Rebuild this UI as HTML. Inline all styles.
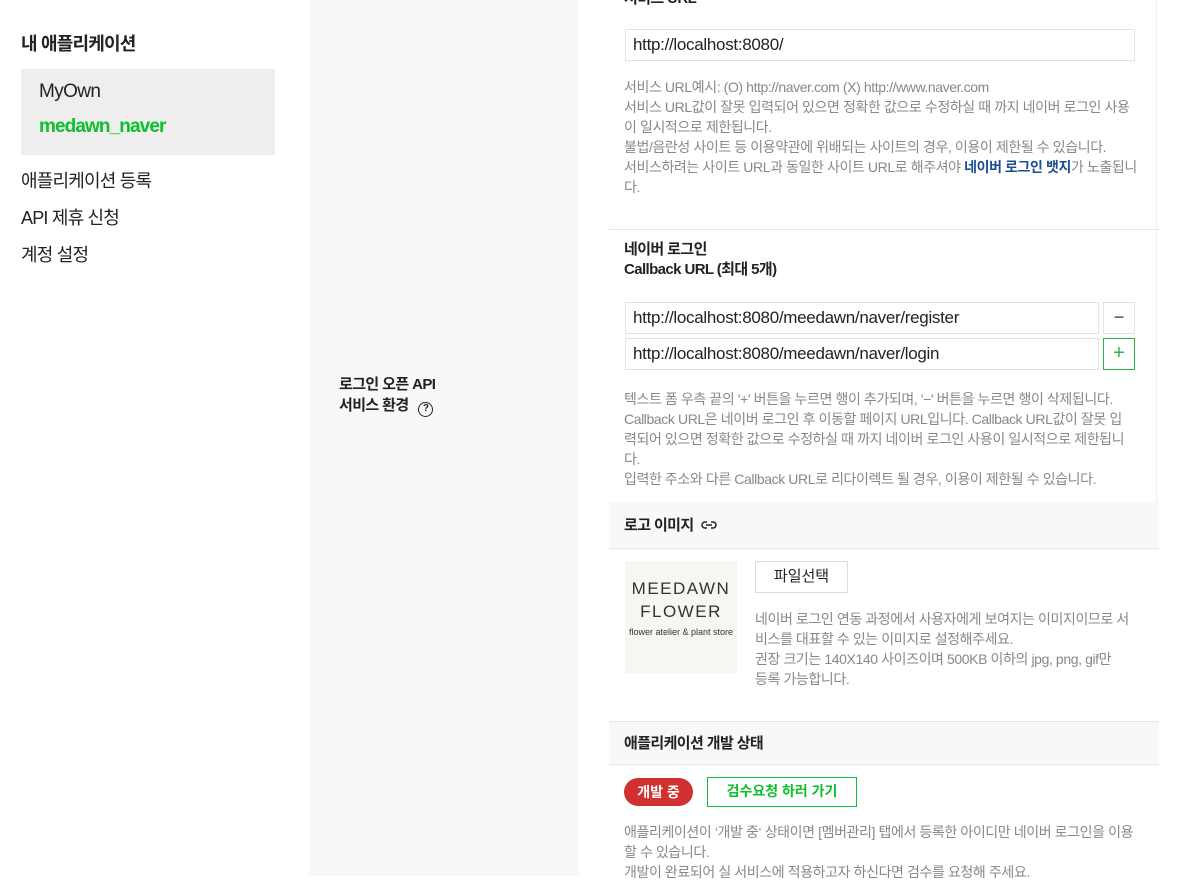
<!DOCTYPE html>
<html><head><meta charset="utf-8"><style>
*{margin:0;padding:0;box-sizing:border-box}
body{width:1179px;height:876px;overflow:hidden;background:#fff;font-family:"Liberation Sans","Noto Sans CJK KR",sans-serif;color:#222;position:relative}
.a{position:absolute;white-space:nowrap}
.desc{font-size:14px;line-height:20px;color:#888;letter-spacing:-0.4px}
.inp{position:absolute;border:1px solid #e2e2e2;height:32px;font-size:17px;line-height:30px;padding-left:7px;color:#222;letter-spacing:-0.3px}
.b{font-weight:bold}
</style></head><body>
<div class="a b" style="left:21px;top:30px;font-size:18px;letter-spacing:-0.8px">내 애플리케이션</div>
<div class="a" style="left:21px;top:69px;width:254px;height:86px;background:#eee"></div>
<div class="a" style="left:39px;top:81px;font-size:19px;letter-spacing:-0.6px">MyOwn</div>
<div class="a b" style="left:39px;top:116px;font-size:19px;color:#0bc02d;letter-spacing:-0.9px">medawn_naver</div>
<div class="a" style="left:21px;top:167px;font-size:18px;letter-spacing:-0.8px">애플리케이션 등록</div>
<div class="a" style="left:21px;top:204px;font-size:18px;letter-spacing:-0.8px">API 제휴 신청</div>
<div class="a" style="left:21px;top:241px;font-size:18px;letter-spacing:-0.8px">계정 설정</div>

<div class="a" style="left:309px;top:0;width:270px;height:876px;background:#f8f8f8"></div>
<div class="a b" style="left:339px;top:374px;font-size:15px;line-height:21px;letter-spacing:-0.6px">로그인 오픈 API<br>서비스 환경 <span style="display:inline-block;width:15px;height:15px;border:1.5px solid #222;border-radius:50%;font-size:10px;line-height:12px;text-align:center;margin-left:6px;vertical-align:-1px">?</span></div>

<div class="a" style="left:1156px;top:0;width:1px;height:502px;background:#eee"></div>

<div class="a b" style="left:624px;top:-13px;font-size:15px;letter-spacing:-0.6px">서비스 URL</div>
<div class="inp" style="left:625px;top:29px;width:510px">http://localhost:8080/</div>
<div class="a desc" style="left:624px;top:77px">서비스 URL예시: (O) http://naver.com (X) http://www.naver.com<br>서비스 URL값이 잘못 입력되어 있으면 정확한 값으로 수정하실 때 까지 네이버 로그인 사용<br>이 일시적으로 제한됩니다.<br>불법/음란성 사이트 등 이용약관에 위배되는 사이트의 경우, 이용이 제한될 수 있습니다.<br>서비스하려는 사이트 URL과 동일한 사이트 URL로 해주셔야 <b style="color:#1a4f91">네이버 로그인 뱃지</b>가 노출됩니<br>다.</div>
<div class="a" style="left:609px;top:229px;width:550px;height:1px;background:#e5e5e5"></div>
<div class="a b" style="left:624px;top:240px;font-size:15px;line-height:20px;letter-spacing:-0.6px">네이버 로그인<br>Callback URL (최대 5개)</div>

<div class="inp" style="left:625px;top:302px;width:474px">http://localhost:8080/meedawn/naver/register</div>
<div class="a" style="left:1103px;top:302px;width:32px;height:32px;border:1px solid #e2e2e2;text-align:center;line-height:28px;font-size:18px;color:#333">−</div>
<div class="inp" style="left:625px;top:338px;width:474px">http://localhost:8080/meedawn/naver/login</div>
<div class="a" style="left:1103px;top:338px;width:32px;height:32px;border:1px solid #2db34a;text-align:center;line-height:28px;font-size:20px;color:#2db34a">+</div>
<div class="a desc" style="left:624px;top:389px">텍스트 폼 우측 끝의 '+' 버튼을 누르면 행이 추가되며, '−' 버튼을 누르면 행이 삭제됩니다.<br>Callback URL은 네이버 로그인 후 이동할 페이지 URL입니다. Callback URL값이 잘못 입<br>력되어 있으면 정확한 값으로 수정하실 때 까지 네이버 로그인 사용이 일시적으로 제한됩니<br>다.<br>입력한 주소와 다른 Callback URL로 리다이렉트 될 경우, 이용이 제한될 수 있습니다.</div>

<div class="a" style="left:609px;top:502px;width:550px;height:47px;background:#f8f8f8;border-bottom:1px solid #e5e5e5"></div>
<div class="a b" style="left:624px;top:514px;font-size:15px;letter-spacing:-0.6px">로고 이미지 <svg width="18" height="12" viewBox="0 0 18 12" style="vertical-align:-1px;margin-left:3px"><path d="M7 3H5a3 3 0 0 0 0 6h2M11 3h2a3 3 0 0 1 0 6h-2M6 6h6" fill="none" stroke="#222" stroke-width="1.5"/></svg></div>
<div class="a" style="left:625px;top:561px;width:112px;height:112px;background:#f7f6f1;text-align:center;color:#333">
<div style="margin-top:16px;font-size:17px;letter-spacing:1.5px;line-height:23px">MEEDAWN<br>FLOWER</div>
<div style="font-size:9px;margin-top:4px">flower atelier &amp; plant store</div></div>
<div class="a" style="left:755px;top:561px;width:93px;height:32px;border:1px solid #ddd;text-align:center;line-height:30px;font-size:15px;color:#222">파일선택</div>
<div class="a desc" style="left:755px;top:609px">네이버 로그인 연동 과정에서 사용자에게 보여지는 이미지이므로 서<br>비스를 대표할 수 있는 이미지로 설정해주세요.<br>권장 크기는 140X140 사이즈이며 500KB 이하의 jpg, png, gif만<br>등록 가능합니다.</div>

<div class="a" style="left:609px;top:721px;width:550px;height:44px;background:#f8f8f8;border-top:1px solid #e5e5e5;border-bottom:1px solid #e5e5e5"></div>
<div class="a b" style="left:624px;top:732px;font-size:15px;letter-spacing:-0.6px">애플리케이션 개발 상태</div>
<div class="a b" style="left:624px;top:778px;width:69px;height:28px;border-radius:14px;background:#d0302f;color:#fff;font-size:14px;text-align:center;line-height:28px">개발 중</div>
<div class="a b" style="left:707px;top:777px;width:150px;height:30px;border:1.5px solid #0bc02d;color:#0bc02d;font-size:14px;text-align:center;line-height:27px">검수요청 하러 가기</div>
<div class="a desc" style="left:624px;top:822px">애플리케이션이 ‘개발 중‘ 상태이면 [멤버관리] 탭에서 등록한 아이디만 네이버 로그인을 이용<br>할 수 있습니다.<br>개발이 완료되어 실 서비스에 적용하고자 하신다면 검수를 요청해 주세요.</div>
</body></html>
